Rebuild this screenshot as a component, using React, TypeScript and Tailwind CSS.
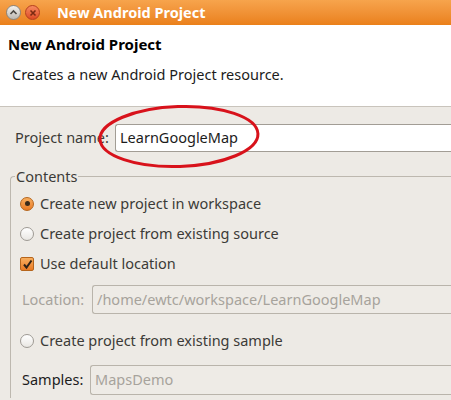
import React from "react";

const font = { fontFamily: '"Noto Sans", "Open Sans", sans-serif' };

function TitleButtons() {
  return (
    <div className="flex items-center gap-[4px]">
      <div className="flex h-[15px] w-[15px] items-center justify-center rounded-full border border-[#8a857e] bg-gradient-to-b from-[#f4f2ef] to-[#bdb8b1]">
        <svg width="9" height="9" viewBox="0 0 9 9">
          <path d="M1.5 6 L4.5 3 L7.5 6" fill="none" stroke="#4a4641" strokeWidth="1.6" />
        </svg>
      </div>
      <div className="flex h-[15px] w-[15px] items-center justify-center rounded-full border border-[#b5401f] bg-gradient-to-b from-[#f7895f] to-[#dd4a23]">
        <svg width="8" height="8" viewBox="0 0 8 8">
          <path d="M1.5 1.5 L6.5 6.5 M6.5 1.5 L1.5 6.5" stroke="#7a2a12" strokeWidth="1.6" />
        </svg>
      </div>
    </div>
  );
}

function Radio({ checked }: { checked?: boolean }) {
  return checked ? (
    <div className="flex h-[14px] w-[14px] items-center justify-center rounded-full border border-[#b6651c] bg-gradient-to-b from-[#f7ae5e] to-[#e97a22]">
      <div className="h-[5px] w-[5px] rounded-full bg-[#3a2a1a]" />
    </div>
  ) : (
    <div className="h-[14px] w-[14px] rounded-full border border-[#9e9a94] bg-gradient-to-b from-white to-[#e9e7e3]" />
  );
}

function Checkbox() {
  return (
    <div className="flex h-[14px] w-[14px] items-center justify-center rounded-[2px] border border-[#b6651c] bg-gradient-to-b from-[#f7ae5e] to-[#e97a22]">
      <svg width="11" height="11" viewBox="0 0 11 11">
        <path d="M2 5.5 L4.5 8.5 L9.5 1.5" fill="none" stroke="#2e2218" strokeWidth="2" />
      </svg>
    </div>
  );
}

function Option({ children, control, h }: { children: React.ReactNode; control: React.ReactNode; h: string }) {
  return (
    <div className={`flex items-center gap-[6px] pl-[9px] ${h}`}>
      {control}
      <span className="text-[14.5px] text-[#3c3b37]">{children}</span>
    </div>
  );
}

export default function App() {
  return (
    <div className="relative h-[400px] w-[451px] overflow-hidden bg-[#edeae5]" style={font}>
      <div className="flex h-[25px] items-center bg-gradient-to-b from-[#f7a44c] to-[#ea8019] pl-[6px]">
        <TitleButtons />
        <span className="ml-[17px] text-[14.5px] font-bold text-white">New Android Project</span>
      </div>

      <div className="h-[82px] border-b border-[#c9c4bc] bg-white px-[8px] pt-[8px]">
        <div className="text-[15px] font-bold leading-[22px] text-black">New Android Project</div>
        <div className="mt-[9px] pl-[4px] text-[14.5px] leading-[20px] text-[#1c1c1c]">
          Creates a new Android Project resource.
        </div>
      </div>

      <div className="flex items-center pl-[15px] pt-[17px]">
        <span className="w-[100px] text-[14.5px] text-[#3c3b37]">Project name:</span>
        <div className="flex h-[28px] flex-1 items-center rounded-l-[3px] border border-r-0 border-[#a29d95] bg-white pl-[4px] text-[14.5px] text-[#1c1c1c]">
          LearnGoogleMap
        </div>
      </div>

      <fieldset className="-mr-[10px] ml-[10px] mt-[15px] rounded-tl-[4px] border border-r-0 border-b-0 border-[#bdb8af] pt-[3px]">
        <legend className="ml-[4px] px-[1px] text-[14.5px] leading-[18px] text-[#3c3b37]">Contents</legend>
        <Option h="h-[31px]" control={<Radio checked />}>Create new project in workspace</Option>
        <Option h="h-[30px]" control={<Radio />}>Create project from existing source</Option>
        <Option h="h-[30px]" control={<Checkbox />}>Use default location</Option>
        <div className="flex h-[41px] items-center pl-[11px]">
          <span className="w-[70px] text-[14.5px] text-[#a7a39c]">Location:</span>
          <div className="flex h-[29px] flex-1 items-center rounded-l-[3px] border border-r-0 border-[#b9b4ab] bg-[#eeebe6] pl-[4px] text-[14.5px] text-[#a7a39c]">
            /home/ewtc/workspace/LearnGoogleMap
          </div>
        </div>
        <Option h="h-[42px]" control={<Radio />}>Create project from existing sample</Option>
        <div className="flex h-[36px] items-center pl-[11px]">
          <span className="w-[68px] text-[14.5px] text-[#1c1c1c]">Samples:</span>
          <div className="flex h-[30px] flex-1 items-center rounded-l-[3px] border border-r-0 border-[#b9b4ab] bg-[#eeebe6] pl-[4px] text-[14.5px] text-[#a7a39c]">
            MapsDemo
          </div>
        </div>
      </fieldset>

      <svg className="pointer-events-none absolute left-[96px] top-[103px]" width="166" height="67" viewBox="0 0 166 67">
        <ellipse cx="83" cy="33.5" rx="79" ry="30" fill="none" stroke="#d8121b" strokeWidth="3" transform="rotate(-2 83 33.5)" />
      </svg>
    </div>
  );
}
